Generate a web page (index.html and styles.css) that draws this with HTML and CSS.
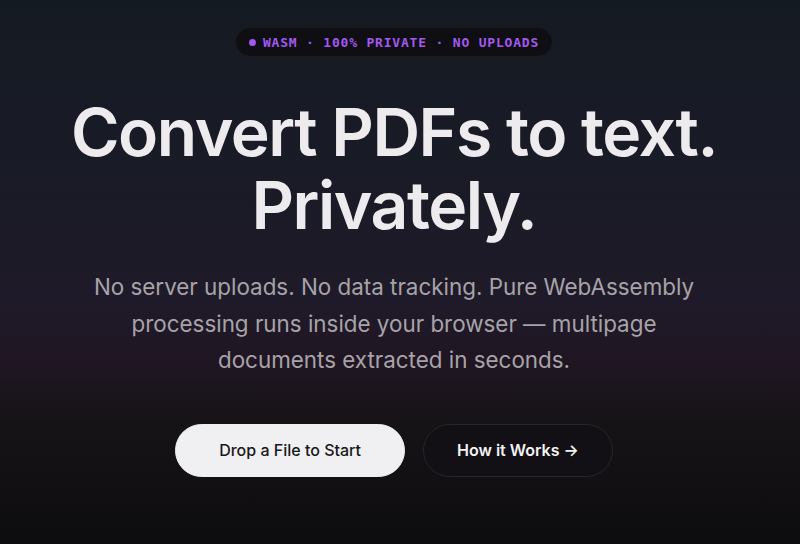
FILE: index.html
```html
<!DOCTYPE html>
<html lang="en">
<head>
  <meta charset="UTF-8">
  <meta name="viewport" content="width=device-width, initial-scale=1.0">
  <title>PDF to Text - WebAssembly</title>
  <link rel="stylesheet" href="styles.css">
</head>
<body>
  <main class="hero">
    <!-- Badge -->
    <div class="badge">
      <span class="badge-dot"></span>
      WASM · 100% PRIVATE · NO UPLOADS
    </div>

    <h1 class="hero-title">Convert PDFs to text.<br>Privately.</h1>

    <p class="hero-lead">
      No server uploads. No data tracking. Pure WebAssembly processing runs inside your browser — multipage documents extracted in seconds.
    </p>

    <div class="actions">
      <button class="btn btn-primary">Drop a File to Start</button>
      <button class="btn btn-ghost">How it Works →</button>
    </div>
  </main>
</body>
</html>
```

FILE: styles.css
```css
/* Page de fond sombre avec dégradé violet */
html, body {
  height: 100%;
}

body {
  margin: 0;
  font-family: 'Inter', 'Liberation Sans', sans-serif;
  color: #f2f0f2;
  background: linear-gradient(180deg,
    #141a22 0%,
    #191b26 30%,
    #1f1a29 55%,
    #201623 66%,
    #161316 78%,
    #0d0c0e 100%);
  overflow: hidden;
}

.hero {
  display: flex;
  flex-direction: column;
  align-items: center;
  text-align: center;
  padding: 27px 12px 0 0;
}

/* Badge */
.badge {
  display: flex;
  align-items: center;
  gap: 7px;
  height: 30px;
  padding: 0 13px 0 13px;
  border-radius: 15px;
  background: #0f0e12;
  border: 1px solid #1a1a20;
  box-sizing: border-box;
  color: #a259f0;
  font-family: 'DejaVu Sans Mono', 'Liberation Mono', monospace;
  font-weight: bold;
  font-size: 13px;
  letter-spacing: 0.8px;
}

.badge-dot {
  width: 7px;
  height: 7px;
  border-radius: 50%;
  background: #a259f0;
}

/* Titre */
.hero-title {
  margin: 39px 0 0;
  font-size: 66px;
  font-weight: 600;
  line-height: 1.1;
  letter-spacing: -0.022em;
  color: #edebed;
}

.hero-lead {
  max-width: 630px;
  margin: 28px 0 0;
  font-size: 22.4px;
  line-height: 36.5px;
  color: #a7a3a8;
}

/* Boutons */
.actions {
  display: flex;
  gap: 18px;
  margin-top: 45px;
}

.btn {
  height: 53px;
  border-radius: 27px;
  font-family: inherit;
  font-size: 16px;
  cursor: pointer;
}

.btn-primary {
  padding: 0 43px;
  background: #f0eff1;
  border: 1px solid #f0eff1;
  color: #18171a;
  font-weight: 500;
}

.btn-ghost {
  padding: 0 33px;
  background: #121014;
  border: 1px solid #28252b;
  color: #f4f2f4;
  font-weight: 600;
}
```
